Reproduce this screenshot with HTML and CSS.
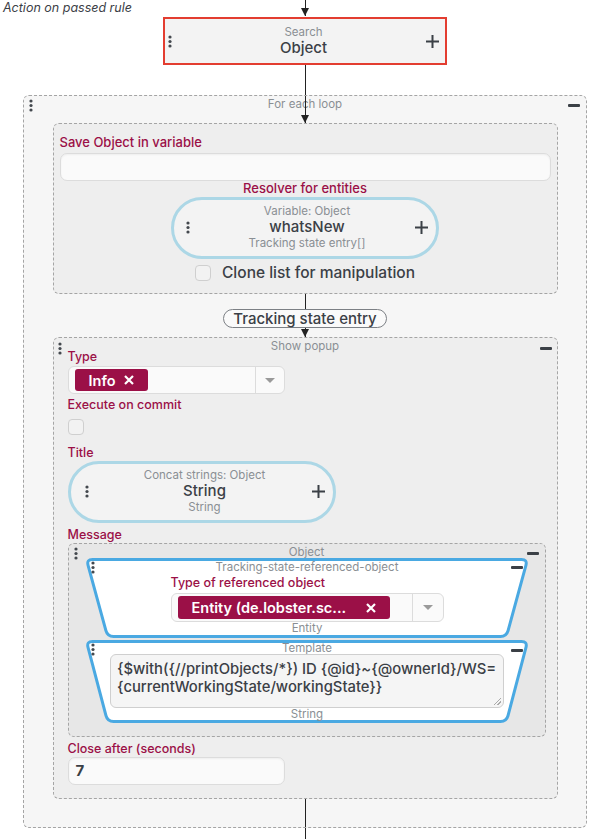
FILE: index.html
```html
<!DOCTYPE html>
<html lang="en">
<head>
    <meta charset="UTF-8">
    <meta name="viewport" content="width=device-width, initial-scale=1.0">
    <title>Rule editor</title>
    <link rel="stylesheet" href="styles.css">
</head>
<body>
    <div class="canvas">
        <div class="top-row">
            <div class="rule-label">Action on passed rule</div>
            <div class="connector arrow top-arrow"></div>
            <div></div>
        </div>

        <!-- Search node (selected) -->
        <div class="node search selected">
            <svg class="dots" width="4" height="13" viewBox="0 0 4 13"><circle cx="2" cy="2" r="1.6"/><circle cx="2" cy="6.5" r="1.6"/><circle cx="2" cy="11" r="1.6"/></svg>
            <div class="node-text">
                <span class="caption">Search</span>
                <span class="node-title">Object</span>
            </div>
            <svg class="plus" width="13" height="13" viewBox="0 0 13 13"><path d="M6.5 0v13M0 6.5h13"/></svg>
        </div>

        <div class="connector link-loop"></div>

        <!-- For each loop -->
        <div class="block loop">
            <svg class="dots" width="4" height="13" viewBox="0 0 4 13"><circle cx="2" cy="2" r="1.6"/><circle cx="2" cy="6.5" r="1.6"/><circle cx="2" cy="11" r="1.6"/></svg>
            <span class="block-title">For each loop</span>
            <span class="minus"></span>
            <div class="connector arrow into-save"></div>

            <div class="block save">
                <div class="field-label">Save Object in variable</div>
                <div class="text-input"></div>
                <div class="field-label resolver-label">Resolver for entities</div>
                <div class="node pill resolver">
                    <svg class="dots" width="4" height="13" viewBox="0 0 4 13"><circle cx="2" cy="2" r="1.6"/><circle cx="2" cy="6.5" r="1.6"/><circle cx="2" cy="11" r="1.6"/></svg>
                    <div class="node-text">
                        <span class="caption">Variable: Object</span>
                        <span class="node-title">whatsNew</span>
                        <span class="caption">Tracking state entry[]</span>
                    </div>
                    <svg class="plus" width="13" height="13" viewBox="0 0 13 13"><path d="M6.5 0v13M0 6.5h13"/></svg>
                </div>
                <div class="check-row">
                    <span class="checkbox"></span>
                    <span>Clone list for manipulation</span>
                </div>
            </div>

            <div class="connector short-link"></div>
            <div class="edge-label">Tracking state entry</div>
            <div class="connector arrow into-popup"></div>

            <!-- Show popup -->
            <div class="block popup">
                <svg class="dots" width="4" height="13" viewBox="0 0 4 13"><circle cx="2" cy="2" r="1.6"/><circle cx="2" cy="6.5" r="1.6"/><circle cx="2" cy="11" r="1.6"/></svg>
                <span class="block-title">Show popup</span>
                <span class="minus"></span>

                <div class="field-label">Type</div>
                <div class="select type-select">
                    <div class="select-value">
                        <span class="tag">Info
                            <svg width="10" height="10" viewBox="0 0 10 10"><path d="M1 1l8 8M9 1l-8 8"/></svg>
                        </span>
                    </div>
                    <div class="select-toggle"></div>
                </div>

                <div class="field-label commit-label">Execute on commit</div>
                <span class="checkbox commit-box"></span>

                <div class="field-label title-label">Title</div>
                <div class="node pill concat">
                    <svg class="dots" width="4" height="13" viewBox="0 0 4 13"><circle cx="2" cy="2" r="1.6"/><circle cx="2" cy="6.5" r="1.6"/><circle cx="2" cy="11" r="1.6"/></svg>
                    <div class="node-text">
                        <span class="caption">Concat strings: Object</span>
                        <span class="node-title">String</span>
                        <span class="caption">String</span>
                    </div>
                    <svg class="plus" width="13" height="13" viewBox="0 0 13 13"><path d="M6.5 0v13M0 6.5h13"/></svg>
                </div>

                <div class="field-label message-label">Message</div>
                <div class="block object">
                    <svg class="dots" width="4" height="13" viewBox="0 0 4 13"><circle cx="2" cy="2" r="1.6"/><circle cx="2" cy="6.5" r="1.6"/><circle cx="2" cy="11" r="1.6"/></svg>
                    <span class="block-title">Object</span>
                    <span class="minus"></span>

                    <div class="trap referenced">
                        <svg class="trap-shape" width="444" height="80" viewBox="0 0 444 80"><path d="M7.5 1.5H436.5Q442.5 1.5 440.92 7.29L423.08 72.71Q421.5 78.5 415.5 78.5H28.5Q22.5 78.5 20.92 72.71L3.08 7.29Q1.5 1.5 7.5 1.5Z"/></svg>
                        <svg class="dots" width="4" height="13" viewBox="0 0 4 13"><circle cx="2" cy="2" r="1.6"/><circle cx="2" cy="6.5" r="1.6"/><circle cx="2" cy="11" r="1.6"/></svg>
                        <span class="block-title">Tracking-state-referenced-object</span>
                        <span class="minus"></span>
                        <div class="trap-body">
                            <div class="field-label">Type of referenced object</div>
                            <div class="select entity-select">
                                <div class="select-value">
                                    <span class="tag entity-tag">Entity (de.lobster.sc...
                                        <svg width="10" height="10" viewBox="0 0 10 10"><path d="M1 1l8 8M9 1l-8 8"/></svg>
                                    </span>
                                </div>
                                <div class="select-toggle"></div>
                            </div>
                            <div class="caption type-caption">Entity</div>
                        </div>
                    </div>

                    <div class="trap template">
                        <svg class="trap-shape" width="444" height="83" viewBox="0 0 444 83"><path d="M7.5 1.5H436.5Q442.5 1.5 440.98 7.3L423.02 75.7Q421.5 81.5 415.5 81.5H28.5Q22.5 81.5 20.98 75.7L3.02 7.3Q1.5 1.5 7.5 1.5Z"/></svg>
                        <svg class="dots" width="4" height="13" viewBox="0 0 4 13"><circle cx="2" cy="2" r="1.6"/><circle cx="2" cy="6.5" r="1.6"/><circle cx="2" cy="11" r="1.6"/></svg>
                        <span class="block-title">Template</span>
                        <span class="minus"></span>
                        <div class="trap-body">
                            <div class="textarea">{$with({//printObjects/*}) ID {@id}~{@ownerId}/WS=<br>{currentWorkingState/workingState}}</div>
                            <div class="caption type-caption">String</div>
                        </div>
                    </div>
                </div>

                <div class="field-label close-label">Close after (seconds)</div>
                <div class="text-input number-input">7</div>
            </div>

            <div class="connector loop-tail"></div>
        </div>
        <div class="connector page-tail"></div>
    </div>
</body>
</html>
```

FILE: styles.css
```css
body {
    margin: 0;
    background-color: #fff;
    font-family: Inter, "Open Sans", sans-serif;
    color: #3b4046;
}

.canvas {
    width: 598px;
    box-sizing: border-box;
    padding-left: 12px;
    display: flex;
    flex-direction: column;
    align-items: center;
}

/* connectors between nodes */
.connector {
    position: relative;
    width: 1px;
    flex-shrink: 0;
    background-color: #222;
}

.connector.arrow::after {
    content: "";
    position: absolute;
    left: -4px;
    bottom: 0;
    border-left: 4.5px solid transparent;
    border-right: 4.5px solid transparent;
    border-top: 8px solid #222;
}

.top-arrow { height: 16px; }
.link-loop { height: 30px; }
.into-save { height: 27px; }
.short-link { height: 15px; }
.into-popup { height: 9px; }
.loop-tail { height: 28px; }
.page-tail { height: 20px; }

.top-row {
    width: 100%;
    height: 17px;
    display: grid;
    grid-template-columns: 1fr 1px 1fr;
}

.rule-label {
    margin-left: -9px;
    font-size: 12.5px;
    line-height: 16px;
    font-style: italic;
    color: #3b4046;
    white-space: nowrap;
}

/* icons */
.dots {
    fill: #43484e;
}

.plus {
    stroke: #3b4046;
    stroke-width: 2;
}

.minus {
    width: 12px;
    height: 2.5px;
    border-radius: 1px;
    background-color: #3b4046;
}

/* nodes */
.node {
    display: grid;
    grid-template-columns: 14px 1fr 14px;
    align-items: center;
    box-sizing: border-box;
    background-color: #f3f3f3;
}

.node .plus {
    justify-self: end;
}

.node-text {
    display: flex;
    flex-direction: column;
    align-items: center;
}

.caption {
    font-size: 11.5px;
    line-height: 14px;
    color: #8a8f94;
}

.node-title {
    font-size: 15px;
    line-height: 18.5px;
    font-weight: 500;
    color: #3b4046;
}

.search {
    width: 284px;
    height: 48px;
    padding: 0 6px 0 3px;
    border: 2px solid #e33d30;
}

.pill {
    width: 268px;
    height: 62px;
    border: 3px solid #acd7e6;
    border-radius: 31px;
    padding: 0 8px 2px 12px;
}

/* blocks */
.block {
    position: relative;
    box-sizing: border-box;
    border: 1px dashed #a5a5a5;
    border-radius: 6px;
    display: flex;
    flex-direction: column;
}

.block > .dots,
.trap > .dots {
    position: absolute;
    left: 5px;
    top: 3px;
}

.block > .minus,
.trap > .minus {
    position: absolute;
    right: 6px;
    top: 8px;
}

.block-title {
    position: absolute;
    top: 1px;
    left: 0;
    right: 0;
    text-align: center;
    font-size: 11.5px;
    line-height: 14px;
    color: #8a8f94;
}

.loop {
    width: 564px;
    align-items: center;
    background-color: #f6f6f6;
}

.save {
    width: 505px;
    padding: 10px 6px 12px;
    background-color: #eeeeee;
}

.popup {
    width: 505px;
    padding: 12px 11px 13px 14px;
    align-items: flex-start;
    background-color: #eeeeee;
}

.popup > .dots {
    left: 4px;
    top: 4px;
}

.popup > .minus {
    right: 5px;
    top: 9px;
}

.object {
    align-self: stretch;
    align-items: center;
    padding: 14px 0 13px;
    background-color: #e7e7e7;
}

.object > .minus {
    right: 6px;
    top: 8px;
}

/* form pieces */
.field-label {
    font-size: 12.5px;
    line-height: 14px;
    font-weight: 500;
    color: #9b1047;
}

.save .field-label {
    font-size: 13px;
    line-height: 16px;
    margin-bottom: 3px;
}

.save .resolver-label {
    align-self: center;
    line-height: 14px;
    margin: 0 0 2px;
}

.resolver {
    align-self: center;
}

.text-input {
    height: 28px;
    box-sizing: border-box;
    border: 1px solid #dcdcdc;
    border-radius: 7px;
    background-color: #fafafa;
    box-shadow: inset 0 1px 2px rgba(0, 0, 0, 0.05);
}

.number-input {
    width: 217px;
    margin-top: 1px;
    padding-left: 7px;
    font-size: 15px;
    line-height: 26px;
    font-weight: 700;
    color: #3b4046;
}

.check-row {
    align-self: center;
    height: 16px;
    margin-top: 6px;
    display: flex;
    align-items: center;
    gap: 11px;
    font-size: 15.5px;
    line-height: 16px;
    font-weight: 500;
    color: #3b4046;
}

.checkbox {
    display: block;
    width: 16px;
    height: 16px;
    box-sizing: border-box;
    border: 1px solid #cfcfcf;
    border-radius: 4px;
    background-color: #f2f2f2;
}

.edge-label {
    height: 19px;
    box-sizing: border-box;
    padding: 0 9px;
    border: 1px solid #7c8085;
    border-radius: 10px;
    background-color: #fafafa;
    font-size: 15px;
    line-height: 17px;
    font-weight: 500;
    color: #3b4046;
}

.select {
    display: flex;
    width: 217px;
    height: 28px;
    box-sizing: border-box;
    margin-top: 2px;
    border: 1px solid #dcdcdc;
    border-radius: 6px;
    background-color: #fafafa;
}

.select-value {
    flex: 1;
    display: flex;
    align-items: center;
    padding-left: 6px;
}

.select-toggle {
    width: 28px;
    display: flex;
    align-items: center;
    justify-content: center;
    border-left: 1px solid #dcdcdc;
}

.select-toggle::before {
    content: "";
    border-left: 5px solid transparent;
    border-right: 5px solid transparent;
    border-top: 5px solid #9a9a9a;
}

.tag {
    display: flex;
    align-items: center;
    gap: 8px;
    height: 22px;
    padding: 0 14px;
    border-radius: 3px;
    background-color: #9b1047;
    color: #fff;
    font-size: 14.5px;
    font-weight: 600;
}

.tag svg {
    stroke: #fff;
    stroke-width: 2.2;
}

.commit-label {
    margin-top: 4px;
}

.commit-box {
    margin-top: 7px;
}

.title-label {
    margin-top: 11px;
}

.concat {
    margin-top: 1px;
    padding-left: 14px;
}

.message-label {
    margin-top: 5px;
    margin-bottom: 1px;
}

.close-label {
    margin-top: 5px;
}

/* trapezoid sub-nodes */
.trap {
    position: relative;
    width: 444px;
    margin-left: 1px;
}

.trap-shape {
    position: absolute;
    left: 0;
    top: 0;
    fill: #fff;
    stroke: #4aa9e2;
    stroke-width: 3;
}

.trap > .dots {
    left: 6px;
    top: 3px;
}

.trap > .block-title {
    top: 2px;
}

.trap-body {
    position: relative;
    display: flex;
    flex-direction: column;
    align-items: center;
}

.referenced {
    height: 80px;
}

.referenced .trap-body {
    width: 273px;
    margin: 0 auto;
    padding-top: 18px;
    align-items: flex-start;
}

.entity-select {
    width: 273px;
    height: 29px;
    margin-top: 3px;
}

.entity-select .select-toggle {
    width: 30px;
}

.entity-tag {
    width: 212px;
    height: 23px;
    box-sizing: border-box;
    justify-content: space-between;
}

.type-caption {
    align-self: center;
    line-height: 12px;
}

.template {
    height: 83px;
    margin-top: 2px;
}

.template > .block-title {
    top: 1px;
}

.template > .minus {
    top: 9px;
}

.template .trap-body {
    padding-top: 14px;
}

.textarea {
    position: relative;
    width: 394px;
    height: 54px;
    box-sizing: border-box;
    padding: 5px 6px;
    border: 1px solid #cfcfcf;
    border-radius: 6px;
    background-color: #f5f5f5;
    font-size: 14.8px;
    line-height: 18px;
    font-weight: 500;
    color: #3b4046;
    white-space: nowrap;
}

.textarea::after {
    content: "";
    position: absolute;
    right: 2px;
    bottom: 2px;
    width: 7px;
    height: 7px;
    background: linear-gradient(135deg, transparent 45%, #aaa 45%, #aaa 55%, transparent 55%, transparent 70%, #aaa 70%, #aaa 80%, transparent 80%);
}
```
